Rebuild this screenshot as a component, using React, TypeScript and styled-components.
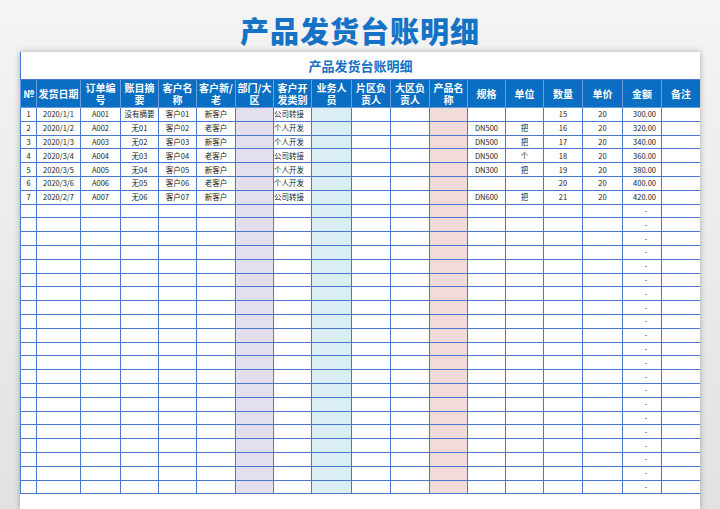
import React from "react";
import styled, { createGlobalStyle } from "styled-components";

const G = createGlobalStyle`
  html,body{margin:0;padding:0;}
  body{width:720px;height:509px;overflow:hidden;background:linear-gradient(#f4f4f4,#e2e2e2);font-family:"Noto Sans CJK SC","Liberation Sans",sans-serif;}
`;
const Page = styled.div`width:720px;height:509px;display:flex;flex-direction:column;align-items:center;overflow:hidden;`;
const Title = styled.h1`margin:10px 0 0;height:42px;font-size:29px;font-weight:900;color:#1572c4;letter-spacing:1px;line-height:40px;`;
const Sheet = styled.div`width:680px;background:#fff;box-shadow:0 0 6px rgba(0,0,0,.3);flex:1;overflow:hidden;`;
const Table = styled.table`border-collapse:collapse;table-layout:fixed;width:680px;
  td,th{border:1px solid #4a78d0;padding:0;overflow:hidden;white-space:nowrap;}`;
const Cap = styled.td`height:27px;text-align:center;color:#1572c4;font-weight:bold;font-size:13px;border-top:none!important;`;
const Th = styled.th`height:27px;background:#0a6fc2;color:#fff;font-size:10px;font-weight:bold;line-height:12px;white-space:normal!important;border-color:#6b9be0!important;`;
const Td = styled.td<{ $bg?: string; $al?: string; $pr?: number }>`height:12.8px;font-size:7.5px;line-height:12px;color:#222;background:${p => p.$bg || "#fff"};text-align:${p => p.$al || "center"};padding-right:${p => p.$pr || 0}px!important;font-family:"Noto Sans CJK SC",serif;`;

const widths = [16, 44, 40, 38, 38, 39, 38, 38, 40, 39, 39, 38, 38, 38, 39, 40, 39, 39];
const heads = ["№", "发货日期", "订单编号", "账目摘要", "客户名称", "客户新/老", "部门/大区", "客户开发类别", "业务人员", "片区负责人", "大区负责人", "产品名称", "规格", "单位", "数量", "单价", "金额", "备注"];
const bgs: Record<number, string> = { 6: "#e4dfec", 8: "#daeef3", 11: "#f2dcdb" };
const data = [
  ["1", "2020/1/1", "A001", "没有摘要", "客户01", "新客户", "", "公司转接", "", "", "", "", "", "", "15", "20", "300.00", ""],
  ["2", "2020/1/2", "A002", "无01", "客户02", "老客户", "", "个人开发", "", "", "", "", "DN500", "把", "16", "20", "320.00", ""],
  ["3", "2020/1/3", "A003", "无02", "客户03", "新客户", "", "个人开发", "", "", "", "", "DN500", "把", "17", "20", "340.00", ""],
  ["4", "2020/3/4", "A004", "无03", "客户04", "老客户", "", "公司转接", "", "", "", "", "DN500", "个", "18", "20", "360.00", ""],
  ["5", "2020/3/5", "A005", "无04", "客户05", "新客户", "", "个人开发", "", "", "", "", "DN300", "把", "19", "20", "380.00", ""],
  ["6", "2020/3/6", "A006", "无05", "客户06", "老客户", "", "个人开发", "", "", "", "", "", "", "20", "20", "400.00", ""],
  ["7", "2020/2/7", "A007", "无06", "客户07", "新客户", "", "公司转接", "", "", "", "", "DN600", "把", "21", "20", "420.00", ""],
];
while (data.length < 28) { const r = Array(18).fill(""); r[16] = "-"; data.push(r); }

export default function App() {
  return (
    <Page>
      <G />
      <Title>产品发货台账明细</Title>
      <Sheet>
        <Table>
          <colgroup>{widths.map((w, i) => <col key={i} style={{ width: w }} />)}</colgroup>
          <tbody>
            <tr><Cap colSpan={18}>产品发货台账明细</Cap></tr>
            <tr>{heads.map((h, i) => <Th key={i}>{h}</Th>)}</tr>
            {data.map((r, ri) => (
              <tr key={ri}>{r.map((c, ci) => (
                <Td key={ci} $bg={bgs[ci]} $al={ci === 7 ? "left" : ci === 16 ? "right" : "center"} $pr={ci === 16 ? (c === "-" ? 14 : 5) : 0}>{c}</Td>
              ))}</tr>
            ))}
          </tbody>
        </Table>
      </Sheet>
    </Page>
  );
}
